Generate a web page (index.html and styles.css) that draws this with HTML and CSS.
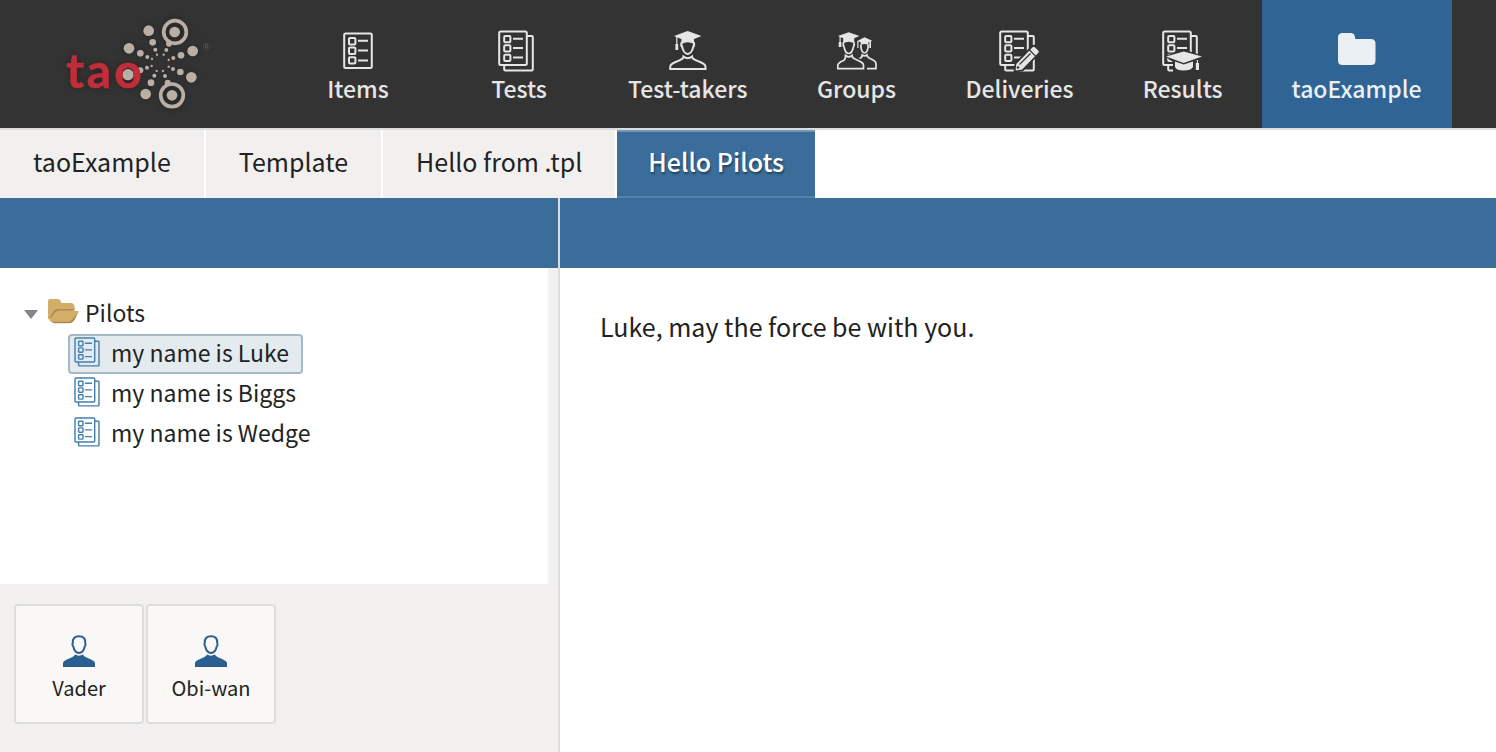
FILE: index.html
```html
<!DOCTYPE html>
<html lang="en">
<head>
<meta charset="utf-8">
<title>TAO - Hello Pilots</title>
<link rel="stylesheet" href="styles.css">
</head>
<body>
<svg class="sprite" aria-hidden="true">
  <symbol id="list" viewBox="0 0 36 42">
    <g fill="none" stroke="currentColor" stroke-width="2">
      <rect x="1.2" y="1.4" width="27.6" height="33.6" rx="1.5"/>
      <rect x="6.2" y="6" width="6.2" height="6.2" rx="1"/>
      <rect x="6.2" y="15.2" width="6.2" height="6.2" rx="1"/>
      <rect x="6.2" y="24.8" width="6.2" height="6.2" rx="1"/>
      <path d="M15 8.7h10M15 18h10M15 27.5h10M29 6h4.8a1 1 0 0 1 1 1v32.4a1 1 0 0 1-1 1H7.2a1 1 0 0 1-1-1V35"/>
    </g>
  </symbol>
  <symbol id="user" viewBox="0 0 32 32">
    <path fill="none" stroke="currentColor" stroke-width="2" d="M16 1.2c-4.400 0-6.600 2.600-6.200 6.800-.7 1-.3 3 .5 3.500.8 3.800 3.200 6.500 5.700 6.500s4.900-2.700 5.700-6.500c.8-.5 1.200-2.500.5-3.500.4-4.200-1.800-6.800-6.200-6.800z"/>
    <path fill="currentColor" d="M12 19.500c2.500 1.500 5.500 1.500 8 0 .8 1.800 2.500 2.500 4.500 3.400 4 1.700 7.500 2.900 7.500 5.500V32H0v-3.600c0-2.600 3.500-3.800 7.500-5.500 2-.9 3.700-1.600 4.500-3.400z"/>
  </symbol>
</svg>

<header class="topbar">
  <a class="logo" href="#" aria-label="tao">
    <svg viewBox="0 0 540 384" width="180" height="128">
      <g fill="#b9afa5">
        <circle cx="296" cy="92" r="16"/><circle cx="308" cy="127" r="10"/><circle cx="316" cy="149" r="6"/><circle cx="321" cy="164" r="3.500"/>
        <circle cx="237" cy="145" r="16"/><circle cx="271" cy="160" r="10"/><circle cx="292" cy="171" r="6"/><circle cx="306" cy="177" r="3.500"/>
        <circle cx="234" cy="224" r="17"/><circle cx="271" cy="211" r="9"/><circle cx="291" cy="203" r="6"/><circle cx="305" cy="198" r="3.500"/>
        <circle cx="287" cy="282" r="16"/><circle cx="303" cy="248" r="10"/><circle cx="313" cy="227" r="6"/><circle cx="320" cy="213" r="3.500"/>
        <circle cx="374" cy="96" r="16"/><circle cx="357" cy="131" r="9"/><circle cx="349" cy="150" r="6"/><circle cx="341" cy="164" r="3.500"/>
        <circle cx="428" cy="153" r="16"/><circle cx="393" cy="166" r="10"/><circle cx="370" cy="174" r="6"/><circle cx="356" cy="180" r="3.500"/>
        <circle cx="424" cy="232" r="16"/><circle cx="391" cy="216" r="10"/><circle cx="369" cy="207" r="6"/><circle cx="356" cy="200" r="3.500"/>
        <circle cx="366" cy="286" r="16"/><circle cx="353" cy="248" r="9"/><circle cx="345" cy="228" r="6"/><circle cx="339" cy="213" r="3.500"/>
      </g>
      <g fill="none" stroke="#b9afa5" stroke-width="11">
        <circle cx="375" cy="96" r="34"/><circle cx="366" cy="286" r="34"/>
      </g>
      <text class="logo-word" x="49 110 193" y="263">tao</text>
      <text class="logo-mark" x="459" y="149">®</text>
    </svg>
  </a>
  <nav class="main-nav">
    <a class="nav-item first" href="#">
      <svg class="nav-icon" width="30" height="42" viewBox="0 -2 30 42"><g fill="none" stroke="currentColor" stroke-width="2">
        <rect x="1.200" y="1.400" width="27.600" height="34.500" rx="1.500"/>
        <rect x="6" y="6" width="6.400" height="6.400" rx="1"/><rect x="6" y="15.500" width="6.400" height="6.400" rx="1"/><rect x="6" y="25.200" width="6.400" height="6.400" rx="1"/>
        <path d="M15 8.700h10M15 18.500h10M15 28.500h10"/></g></svg>
      <span>Items</span>
    </a>
    <a class="nav-item" href="#">
      <svg class="nav-icon" width="42" height="42"><use href="#list" width="36" height="42"/></svg>
      <span>Tests</span>
    </a>
    <a class="nav-item" href="#">
      <svg class="nav-icon" width="38" height="42" viewBox="0 0 38 42">
        <path fill="currentColor" d="M18.700 1 32.500 6 25 9v5q-6.300-3.500-12.600 0V9l-4-1.500V14h.8v6H6.400v-6h.8V7L5 6z"/>
        <g fill="none" stroke="currentColor" stroke-width="2"><path d="M12.700 12c-.8 2-.4 4 .5 5 .8 4 3.200 7 5.500 7s4.700-3 5.500-7c.9-1 1.300-3 .5-5"/>
        <path d="M14.500 26.500c2.500 2 6 2 8.500 0 0 2.500 2 3 5 4.200 5 2 8.500 3.300 8.500 6v2.400H1.200v-2.400c0-2.700 3.500-4 8.500-6 3-1.200 4.800-1.700 4.800-4.200z"/></g></svg>
      <span>Test-takers</span>
    </a>
    <a class="nav-item" href="#">
      <svg class="nav-icon" width="42" height="42" viewBox="0 0 42 42">
        <path fill="currentColor" d="M12.700 2.300 23.400 6l-5.200 2.300v5q-5.500-3-11 0V8.300L4.700 7.300V12h.7v5H2.700v-5h.8V6.700L2 6zM28.500 7.300l7.700 3.400-1.200.6V18h-1.700v-6l-1.100.4V15q-3.700-2-7.400 0v-2.600l-2.300-.8V18h-1.200v-7z"/>
        <g fill="none" stroke="currentColor" stroke-width="1.700"><path d="M7.600 12c-.8 2-.3 4 .4 5 .8 4 2.800 6.500 4.700 6.500s3.900-2.500 4.700-6.500c.7-1 1.200-3 .4-5M24.900 14.500c-.4 5 1.600 8.500 3.600 8.500s4-3.500 3.600-8.500"/>
        <path d="M9.500 25.500c2 1.600 4.500 1.600 6.500 0 0 2.500 2 3.200 4.500 4.300 4.500 2 7 3 7 5.500v3.300H1.800v-3.300c0-2.500 2.500-3.500 6-5 1.500-.8 1.700-2.300 1.700-4.800zM23.500 28.500c2-.7 2.700-1.700 2.700-3.500 1.500 1 3.400 1 4.700 0 0 2 2 3 4.200 4 3.500 1.500 4.900 2.500 4.900 5v4.600h-9"/></g></svg>
      <span>Groups</span>
    </a>
    <a class="nav-item" href="#">
      <svg class="nav-icon" width="42" height="42" viewBox="0 0 42 42"><use href="#list" width="36" height="42"/>
        <path fill="currentColor" stroke="#333" stroke-width="1.800" d="m15.500 41.500 1-8L33 16.500q2-1.500 3.500 0l3.500 3.500q1.500 1.800 0 3.500L23.500 40.500z"/>
        <path fill="none" stroke="#333" stroke-width="1.200" d="m30 19.500 6.800 6.800M20.500 34.500 31.500 23.500"/><circle cx="19" cy="37.500" r="1.300" fill="#333"/></svg>
      <span>Deliveries</span>
    </a>
    <a class="nav-item" href="#">
      <svg class="nav-icon" width="42" height="42" viewBox="0 0 42 42"><use href="#list" width="36" height="42"/>
        <path fill="#333" d="M2.500 26 21.700 19.500 42 26v16H11V32z"/>
        <path fill="currentColor" d="M4 26.500 21.700 21.500 40 26.500 21.700 33zM13 31.500l8.700 3 9.300-3V37q-2 3.500-9.300 3.500T13 37zM34.800 30h1.200v3h1v7h-3.200v-7h1z"/></svg>
      <span>Results</span>
    </a>
    <a class="nav-item active" href="#" aria-current="page">
      <svg class="nav-icon" width="38" height="42" viewBox="0 0 38 42"><path fill="currentColor" d="M4.500 3H13q4 0 4.300 6H33q4.500 0 4.500 4.500v17q0 4.500-4.500 4.500H4.500Q0 35 0 30.500v-23Q0 3 4.500 3z"/></svg>
      <span>taoExample</span>
    </a>
  </nav>
</header>

<nav class="tabs">
  <a class="tab" href="#">taoExample</a>
  <a class="tab" href="#">Template</a>
  <a class="tab" href="#">Hello from .tpl</a>
  <a class="tab active" href="#" aria-current="page">Hello Pilots</a>
</nav>

<div class="workspace">
  <aside class="sidebar">
    <div class="actionbar"></div>
    <div class="tree-panel">
      <div class="tree-root">
        <svg class="caret" width="14" height="10" viewBox="0 0 14 10"><path fill="#858585" d="M0 0h14L7 9z"/></svg>
        <svg width="32" height="26" viewBox="0 0 32 26">
          <path fill="#d3ae69" d="M0 20V2Q0 0 2 0h8Q12 0 12.500 2L13.500 4h10q3 0 3.500 6L24 22H5z"/>
          <path fill="#ad8a50" d="M2 19c2-5 4-9 8-9h16l-1 1.500H11.500c-3.500 0-5.500 4-8 8z"/>
          <path fill="#d3ae69" d="M2 21c3-5 5-9 9-9h20l-6 8q-2 3-5 3H5q-3 0-3-2z"/>
          <path fill="#ad8a50" d="M3 22.800H20q3-.3 5-3.300l6-7.500-4 8q-2.500 4.300-5.500 4.300H6z"/></svg>
        <span>Pilots</span>
      </div>
      <ul class="tree">
        <li><a class="leaf selected" href="#"><svg width="26" height="30"><use href="#list"/></svg>my name is Luke</a></li>
        <li><a class="leaf" href="#"><svg width="26" height="30"><use href="#list"/></svg>my name is Biggs</a></li>
        <li><a class="leaf" href="#"><svg width="26" height="30"><use href="#list"/></svg>my name is Wedge</a></li>
      </ul>
    </div>
    <div class="actions">
      <button class="action" type="button"><svg width="32" height="32"><use href="#user"/></svg>Vader</button>
      <button class="action" type="button"><svg width="32" height="32"><use href="#user"/></svg>Obi-wan</button>
    </div>
  </aside>
  <main class="content">
    <div class="actionbar"></div>
    <p class="message">Luke, may the force be with you.</p>
  </main>
</div>
</body>
</html>
```
FILE: styles.css
```css
* { box-sizing: border-box; }

body {
  margin: 0;
  min-height: 100vh;
  display: flex;
  flex-direction: column;
  background: #fff;
  color: #222;
  font-family: "Noto Sans CJK SC", "Open Sans", sans-serif;
  font-size: 25px;
  line-height: 32px;
}

a { color: inherit; text-decoration: none; }
svg { display: block; flex: none; }
.sprite { position: absolute; width: 0; height: 0; }

.topbar {
  display: flex;
  background: #333;
  border-bottom: 2px solid #ddd;
}
.logo { flex: none; margin-left: 50px; }
.logo svg { filter: drop-shadow(0 0 3px rgba(0, 0, 0, .3)); }
.logo-word {
  fill: #c12d3a;
  stroke: #c12d3a;
  stroke-width: 2;
  stroke-linejoin: round;
  font: 700 144px Lato, sans-serif;
}
.logo-mark { fill: #655f5b; font: 28px "Liberation Sans", sans-serif; }

.main-nav {
  display: flex;
  gap: 9px;
  margin-left: 58px;
}
.nav-item {
  display: flex;
  flex-direction: column;
  align-items: center;
  min-width: 140px;
  padding: 30px 30px 24px;
  color: #e6e6e6;
  font-size: 23px;
  font-weight: 500;
  white-space: nowrap;
}
.nav-item.first { margin-right: 12px; }
.nav-item.active { background: #2f6494; color: #ebf0f4; }

.tabs { display: flex; gap: 2px; }
.tab {
  height: 68px;
  padding: 15px 33px;
  background: #f2f0ee;
  white-space: nowrap;
}
.tab.active {
  padding: 13px 31px;
  border-top: 2px solid #6f97b9;
  border-bottom: 2px solid #5581a9;
  background: #3a6d9a;
  color: #fff;
  font-weight: 500;
  text-shadow: 1px 2px 2px rgba(0, 0, 0, .4);
}

.workspace { display: flex; flex: 1; }
.sidebar {
  flex: 0 0 560px;
  border-right: 2px solid #ddd;
  background: #f2f1ef;
}
.actionbar { height: 70px; background: #3a6d9a; }
.tree-panel {
  min-height: 316px;
  margin-right: 10px;
  padding: 26px 24px;
  background: #fff;
  font-size: 23px;
}
.tree-root {
  display: flex;
  align-items: center;
  gap: 5px;
  height: 40px;
  padding-bottom: 4px;
}
.caret { margin: 6px 5px 0 0; }
.tree { margin: 0; padding: 0 0 0 44px; list-style: none; }
.leaf {
  display: inline-flex;
  align-items: center;
  gap: 11px;
  height: 40px;
  padding: 0 12px 4px 4px;
  border: 2px solid transparent;
  border-radius: 4px;
  vertical-align: top;
}
.leaf svg { color: #4480ad; }
.leaf.selected { border-color: #a6b9c6; background: #e4ebef; }

.actions { display: flex; gap: 2px; padding: 20px 14px; }
.action {
  display: flex;
  flex-direction: column;
  align-items: center;
  gap: 5px;
  width: 130px;
  height: 120px;
  padding: 29px 0 0;
  border: 2px solid #ddd;
  border-radius: 4px;
  background: #f9f8f6;
  color: #222;
  font: inherit;
  font-size: 20px;
}
.action svg { color: #2a5f91; }

.content { flex: 1; }
.message { margin: 0; padding: 42px 40px; }
```
